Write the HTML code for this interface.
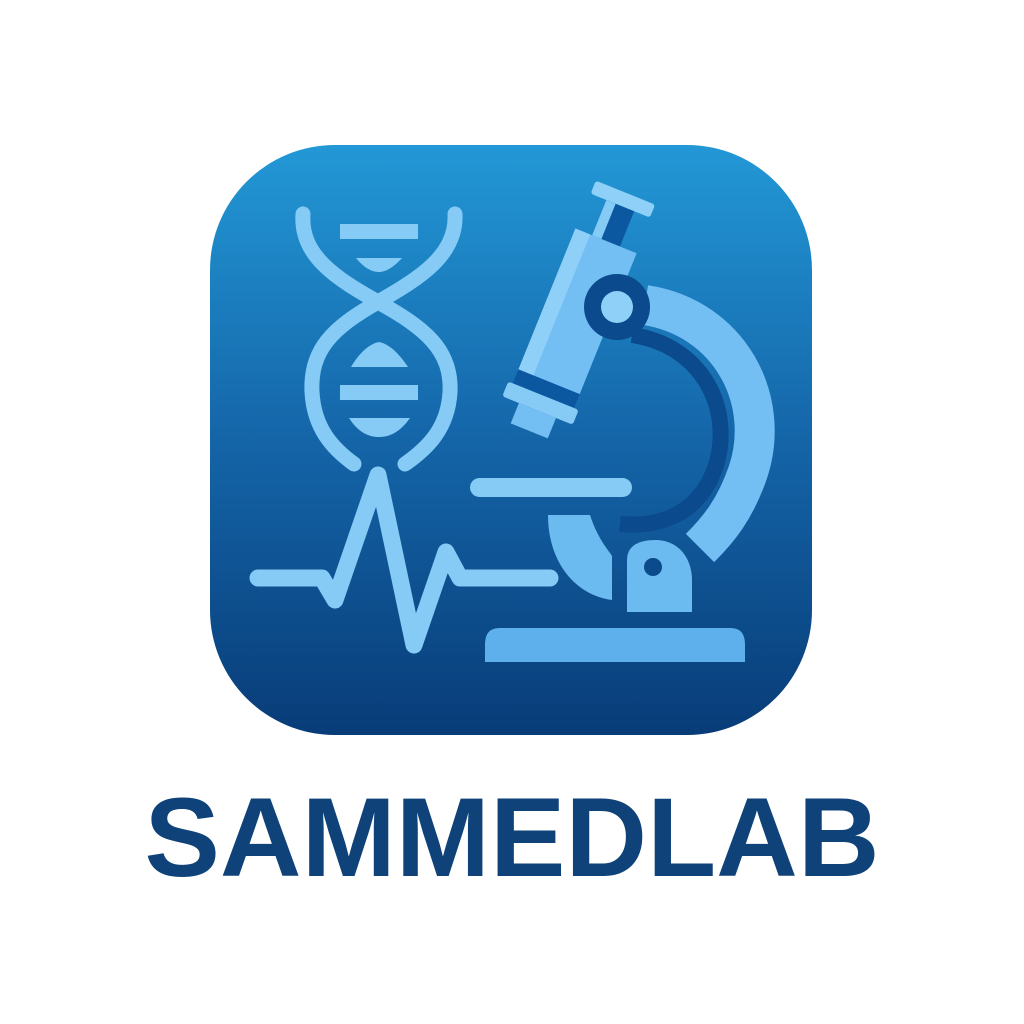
<!DOCTYPE html>
<html><head><meta charset="utf-8"><style>
html,body{margin:0;padding:0;background:#fff;}
svg{display:block}
</style></head><body>
<svg width="1024" height="1024" viewBox="0 0 1024 1024" xmlns="http://www.w3.org/2000/svg">
<defs>
<linearGradient id="bg" x1="0" y1="0" x2="0" y2="1">
<stop offset="0" stop-color="#2398d6"/>
<stop offset="0.5" stop-color="#1465a8"/>
<stop offset="1" stop-color="#083c78"/>
</linearGradient>
</defs>
<rect x="210" y="145" width="602" height="590" rx="125" fill="url(#bg)"/>
<g fill="none" stroke="#85cbf6" stroke-width="15" stroke-linecap="round">
<path d="M303,214 C300,255 335,278 378,302 C425,328 452,350 450,392 C448,428 428,448 405,464"/>
<path d="M455,214 C457,255 420,278 378,302 C332,328 310,350 312,392 C314,428 332,448 354,464"/>
</g>
<g fill="#85cbf6">
<rect x="340" y="224" width="78" height="15"/>
<path d="M356,258 H402 C393,268 385,272 379,272 C372,272 364,268 356,258 Z"/>
<path d="M351,367 H408 C400,355 390,344 379,342 C368,344 358,355 351,367 Z"/>
<rect x="340" y="385" width="78" height="15"/>
<path d="M349,418 H410 C400,432 390,437 379,437 C368,437 358,432 349,418 Z"/>
</g>
<polyline points="258,578 322,578 335,600 378,475 414,645 446,552 460,578 550,578" fill="none" stroke="#85cbf6" stroke-width="17" stroke-linejoin="round" stroke-linecap="round"/>
<path d="M645,305 C730,318 772,400 748,472 C735,510 718,530 700,548" fill="none" stroke="#73bff3" stroke-width="40"/>
<path d="M632,335 C700,345 732,405 717,462 C703,510 665,528 620,524" fill="none" stroke="#0b4a8c" stroke-width="16"/>
<g transform="rotate(22 577 310)">
<rect x="546" y="183" width="64" height="14" rx="3" fill="#8fd0f8"/>
<rect x="563" y="197" width="30" height="38" fill="#0c58a0"/>
<rect x="563" y="197" width="10" height="38" fill="#85cbf6"/>
<rect x="545" y="235" width="66" height="152" fill="#73bff3"/>
<rect x="545" y="235" width="16" height="152" fill="#8fd0f8"/>
<rect x="545" y="387" width="66" height="15" fill="#0c58a0"/>
<rect x="540" y="402" width="76" height="16" rx="3" fill="#85cbf6"/>
<rect x="558" y="418" width="40" height="22" fill="#73bff3"/>
</g>
<circle cx="617" cy="307" r="33" fill="#0b4a8c"/>
<circle cx="617" cy="307" r="16" fill="#8fd0f8"/>
<rect x="470" y="478" width="162" height="19" rx="9.5" fill="#85cbf6"/>
<path d="M548,515 H590 C598,540 610,552 612,556 V600 C575,595 548,562 548,515 Z" fill="#6bbaf0"/>
<path d="M627,612 V560 C627,545 640,540 655,540 C680,540 692,560 692,580 V612 Z" fill="#6bbaf0"/>
<circle cx="653" cy="567" r="9" fill="#0b4a8c"/>
<path d="M485,662 V645 C485,633 490,628 500,628 H730 C740,628 745,633 745,645 V662 Z" fill="#5eb0ec"/>
<text x="512" y="876" text-anchor="middle" font-family="Liberation Sans, sans-serif" font-weight="bold" font-size="112" fill="#0e4278" textLength="735" lengthAdjust="spacingAndGlyphs">SAMMEDLAB</text>
</svg>
</body></html>
